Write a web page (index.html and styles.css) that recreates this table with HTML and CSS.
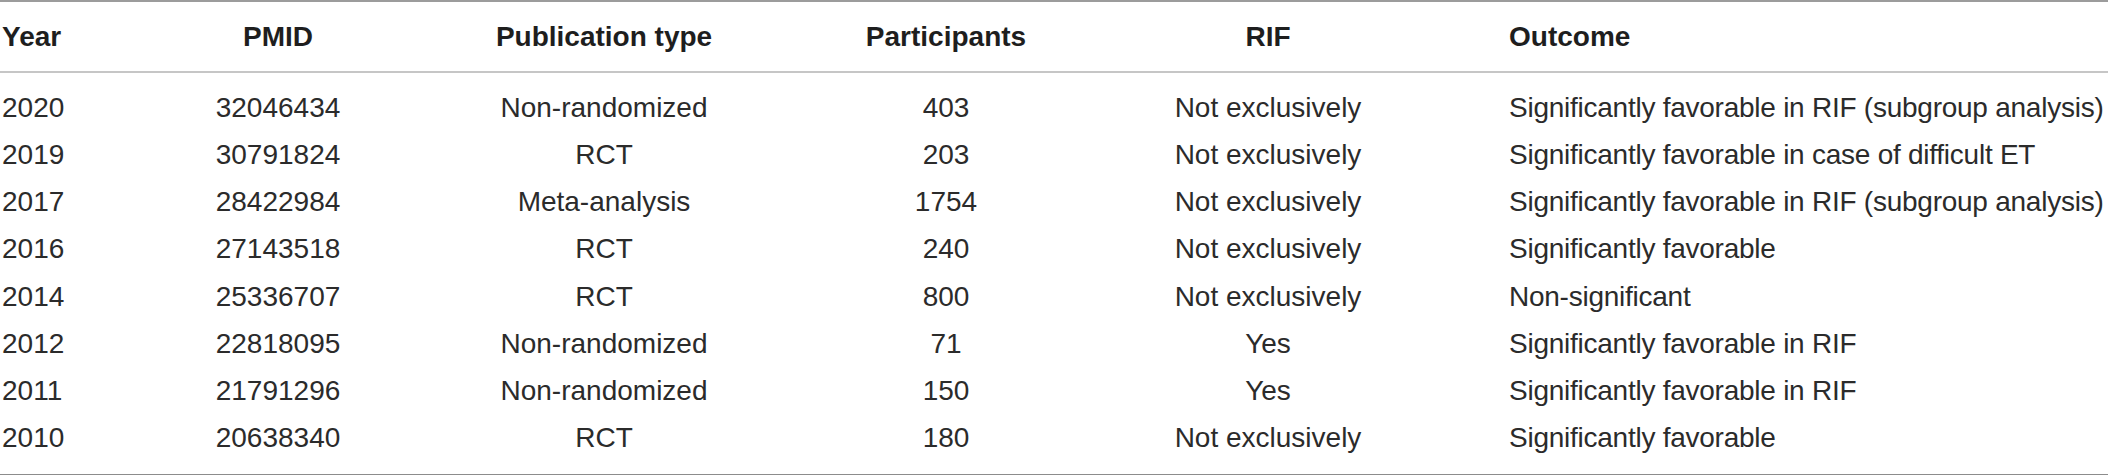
FILE: index.html
```html
<!DOCTYPE html>
<html lang="en">
<head>
<meta charset="utf-8">
<title>RIF studies table</title>
<link rel="stylesheet" href="styles.css">
</head>
<body>
<div class="table">
  <div class="row head">
    <div class="cell left">Year</div>
    <div class="cell">PMID</div>
    <div class="cell">Publication type</div>
    <div class="cell">Participants</div>
    <div class="cell">RIF</div>
    <div class="cell outcome">Outcome</div>
  </div>
  <div class="body">
    <div class="row">
      <div class="cell left">2020</div>
      <div class="cell">32046434</div>
      <div class="cell">Non-randomized</div>
      <div class="cell">403</div>
      <div class="cell">Not exclusively</div>
      <div class="cell outcome">Significantly favorable in RIF (subgroup analysis)</div>
    </div>
    <div class="row">
      <div class="cell left">2019</div>
      <div class="cell">30791824</div>
      <div class="cell">RCT</div>
      <div class="cell">203</div>
      <div class="cell">Not exclusively</div>
      <div class="cell outcome">Significantly favorable in case of difficult ET</div>
    </div>
    <div class="row">
      <div class="cell left">2017</div>
      <div class="cell">28422984</div>
      <div class="cell">Meta-analysis</div>
      <div class="cell">1754</div>
      <div class="cell">Not exclusively</div>
      <div class="cell outcome">Significantly favorable in RIF (subgroup analysis)</div>
    </div>
    <div class="row">
      <div class="cell left">2016</div>
      <div class="cell">27143518</div>
      <div class="cell">RCT</div>
      <div class="cell">240</div>
      <div class="cell">Not exclusively</div>
      <div class="cell outcome">Significantly favorable</div>
    </div>
    <div class="row">
      <div class="cell left">2014</div>
      <div class="cell">25336707</div>
      <div class="cell">RCT</div>
      <div class="cell">800</div>
      <div class="cell">Not exclusively</div>
      <div class="cell outcome">Non-significant</div>
    </div>
    <div class="row">
      <div class="cell left">2012</div>
      <div class="cell">22818095</div>
      <div class="cell">Non-randomized</div>
      <div class="cell">71</div>
      <div class="cell">Yes</div>
      <div class="cell outcome">Significantly favorable in RIF</div>
    </div>
    <div class="row">
      <div class="cell left">2011</div>
      <div class="cell">21791296</div>
      <div class="cell">Non-randomized</div>
      <div class="cell">150</div>
      <div class="cell">Yes</div>
      <div class="cell outcome">Significantly favorable in RIF</div>
    </div>
    <div class="row">
      <div class="cell left">2010</div>
      <div class="cell">20638340</div>
      <div class="cell">RCT</div>
      <div class="cell">180</div>
      <div class="cell">Not exclusively</div>
      <div class="cell outcome">Significantly favorable</div>
    </div>
  </div>
</div>
</body>
</html>
```
FILE: styles.css
```css
html, body {
  margin: 0;
  padding: 0;
  background: #ffffff;
}

body {
  font-family: "Liberation Sans", Arial, sans-serif;
  font-size: 28px;
  color: #2b2b2b;
}

.table {
  width: 2108px;
  border-top: 2px solid #9c9c9c;
  border-bottom: 2px solid #8c8c8c;
}

.row {
  display: grid;
  grid-template-columns: 190px 176px 476px 208px 436px 1fr;
  align-items: center;
  height: 47.25px;
}

.head {
  height: 69px;
  font-weight: bold;
  color: #1e1e1e;
  border-bottom: 2px solid #c6c6c6;
}

.body {
  padding: 11px 0 12px;
}

.cell {
  text-align: center;
  white-space: nowrap;
}

.cell.left {
  text-align: left;
  padding-left: 2px;
}

.cell.outcome {
  text-align: left;
  padding-left: 23px;
  letter-spacing: -0.25px;
}

.head .cell.outcome {
  letter-spacing: 0;
}
```
